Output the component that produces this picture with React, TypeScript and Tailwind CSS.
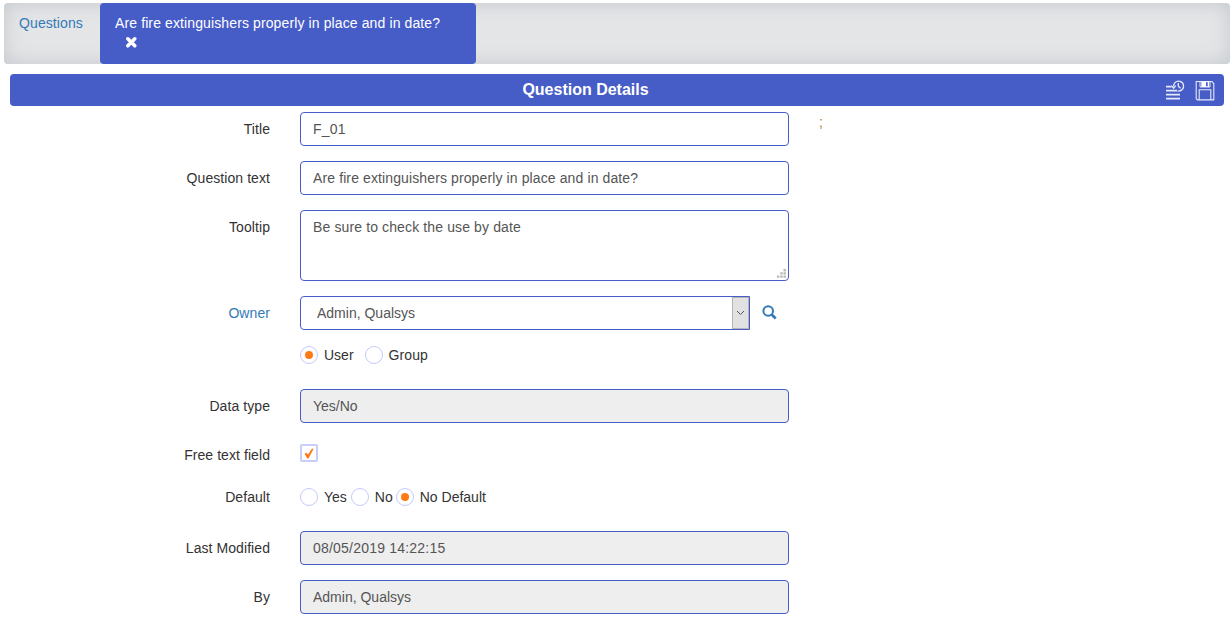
import React, { useState } from 'react'

const inputClass =
  'block w-[489px] h-[34px] rounded border border-[#465cc7] px-3 text-[#555] outline-none'

function Row({
  label,
  link,
  className = '',
  children,
}: {
  label?: string
  link?: boolean
  className?: string
  children: React.ReactNode
}) {
  return (
    <div className={`flex ${className}`}>
      <div
        className={`w-[270px] shrink-0 pt-[7px] mr-[30px] text-right tracking-[0.07px] ${link ? 'text-[#337ab7]' : 'text-[#333]'}`}
      >
        {label}
      </div>
      {children}
    </div>
  )
}

function Radio({
  label,
  checked,
  className = '',
  onSelect,
}: {
  label: string
  checked: boolean
  className?: string
  onSelect: () => void
}) {
  return (
    <button type="button" className={`flex h-5 items-center ${className}`} onClick={onSelect}>
      <span className="mr-1.5 flex size-[18px] items-center justify-center rounded-full border border-[#c5cafa] bg-white">
        {checked && <span className="size-2 rounded-full bg-[#ff7a14]" />}
      </span>
      {label}
    </button>
  )
}

function HistoryIcon() {
  return (
    <svg width="20" height="20" viewBox="0 0 20 20" fill="none" stroke="#e6e9fa">
      <path d="M1 6.7h5.5M1 10.7h11M1 14.7h14M1 18.7h14" strokeWidth="1.8" />
      <path d="M8.6 6.4a5 5 0 1 1 4 4.6" strokeWidth="1.4" />
      <path d="M6.4 5.6l2.2 2.6 2.2-2.6M13.3 3v3.2l2.2 2" strokeWidth="1.3" />
    </svg>
  )
}

function SaveIcon() {
  return (
    <svg width="20" height="21" viewBox="0 0 20 21" fill="none" stroke="#e6e9fa">
      <path d="M1.2 1.5h15.6l2 2v16.4H2.4l-1.2-1.2z" strokeWidth="1.1" />
      <path d="M4.2 20v-10.3h11.6V20" strokeWidth="1.1" />
      <path d="M5 1.5v5.5h10V1.5" strokeWidth="1" />
      <path d="M6.3 1.5h7.7v5.5H6.3z" fill="#fff" stroke="none" />
      <path d="M11 2.2h1.7v4H11z" fill="#465cc7" stroke="none" />
    </svg>
  )
}

export default function App() {
  const [ownerType, setOwnerType] = useState('User')
  const [defaultValue, setDefaultValue] = useState('No Default')
  const [freeText, setFreeText] = useState(true)

  return (
    <div className="h-[623px] w-[1232px] overflow-hidden bg-white pt-[3px] font-['Liberation_Sans',Arial,sans-serif] text-sm leading-5 text-[#333]">
      {/* Tabs */}
      <nav className="ml-1 flex h-[61px] w-[1226px] rounded bg-[#e4e5e7] shadow-[inset_0_0_20px_#c3c8cc]">
        <a className="w-24 px-[15px] py-2.5 tracking-[0.1px] text-[#337ab7]">Questions</a>
        <div className="w-[376px] rounded bg-[#465cc7] px-[15px] py-2.5 text-white">
          <div className="whitespace-nowrap tracking-[0.115px]">Are fire extinguishers properly in place and in date?</div>
          <svg className="ml-[10px] mt-[3px]" width="13" height="13" viewBox="0 0 13 13">
            <path d="M2.8 2.8l7 7M9.8 2.8l-7 7" stroke="#fff" strokeWidth="3.6" strokeLinecap="round" />
          </svg>
        </div>
      </nav>

      {/* Panel header */}
      <header className="ml-2.5 mt-2.5 flex h-8 w-[1214px] items-center rounded bg-[#465cc7] text-white">
        <h1 className="flex-1 pr-1 text-center text-base font-bold">Question Details</h1>
        <div className="mr-[9px] flex items-center gap-2.5">
          <HistoryIcon />
          <SaveIcon />
        </div>
      </header>

      <form className="mt-1.5">
        <Row label="Title" className="mb-[15px]">
          <input className={`${inputClass} tracking-[0.25px]`} defaultValue="F_01" />
          <span className="ml-[30px] text-[#b8792e]">;</span>
        </Row>

        <Row label="Question text" className="mb-[15px]">
          <input
            className={`${inputClass} tracking-[0.115px]`}
            defaultValue="Are fire extinguishers properly in place and in date?"
          />
        </Row>

        <Row label="Tooltip" className="mb-[15px]">
          <div className="relative h-[71px]">
            <textarea
              className="block h-[71px] w-[489px] resize-none rounded border border-[#465cc7] px-3 py-1.5 tracking-[0.125px] text-[#555] outline-none"
              defaultValue="Be sure to check the use by date"
            />
            <svg className="absolute bottom-[3px] right-[3px]" width="9" height="9" viewBox="0 0 9 9" fill="#b8b8b8">
              <path d="M6.5 0h2.4v2.4H6.5zM3.3 3.2h2.4v2.4H3.3zM6.5 3.2h2.4v2.4H6.5zM0 6.4h2.4v2.4H0zM3.3 6.4h2.4v2.4H3.3zM6.5 6.4h2.4v2.4H6.5z" />
            </svg>
          </div>
        </Row>

        <Row label="Owner" link className="mb-[15px]">
          <div className="flex h-[34px] w-[450px] items-stretch rounded-l border border-[#465cc7]">
            <span className="flex-1 pl-4 pt-1.5 text-[#555]">Admin, Qualsys</span>
            <span className="flex w-[17px] items-center justify-center border border-[#b5b5b5] bg-[#e1e1e1]">
              <svg width="9" height="6" viewBox="0 0 9 6" fill="none" stroke="#555">
                <path d="M1 1l3.5 3.5L8 1" />
              </svg>
            </span>
          </div>
          <svg className="ml-3 mt-[9px]" width="15" height="15" viewBox="0 0 15 15" fill="none" stroke="#337ab7">
            <circle cx="6.2" cy="6" r="4.8" strokeWidth="2" />
            <path d="M9.7 9.5l4 4" strokeWidth="2.6" />
          </svg>
        </Row>

        <Row className="mb-6 h-5">
          <Radio label="User" checked={ownerType === 'User'} onSelect={() => setOwnerType('User')} />
          <Radio
            label="Group"
            className="ml-[11px] tracking-[0.1px]"
            checked={ownerType === 'Group'}
            onSelect={() => setOwnerType('Group')}
          />
        </Row>

        <Row label="Data type" className="mb-[15px]">
          <input className={`${inputClass} bg-[#eee]`} value="Yes/No" readOnly />
        </Row>

        <Row label="Free text field" className="mb-[15px] h-[34px]">
          <button
            type="button"
            className="mt-[6px] flex size-[18px] items-center justify-center rounded-xs border-2 border-[#c9cdf9] bg-white"
            onClick={() => setFreeText(!freeText)}
          >
            {freeText && (
              <svg className="shrink-0" width="10" height="11" viewBox="0 0 10 11" fill="#ff7a14">
                <path d="M.6 5.8l1.7-1.1 1.7 1.9L8 .6l1.5.5-5 9.3H3.3z" />
              </svg>
            )}
          </button>
        </Row>

        <Row label="Default" className="-mt-[7px] mb-[17px] h-[34px]">
          <div className="flex pt-[7px]">
            <Radio label="Yes" checked={defaultValue === 'Yes'} onSelect={() => setDefaultValue('Yes')} />
            <Radio
              label="No"
              className="ml-1"
              checked={defaultValue === 'No'}
              onSelect={() => setDefaultValue('No')}
            />
            <Radio
              label="No Default"
              className="ml-[3px]"
              checked={defaultValue === 'No Default'}
              onSelect={() => setDefaultValue('No Default')}
            />
          </div>
        </Row>

        <Row label="Last Modified" className="mb-[15px]">
          <input className={`${inputClass} bg-[#eee] tracking-[0.21px]`} value="08/05/2019 14:22:15" readOnly />
        </Row>

        <Row label="By">
          <input className={`${inputClass} bg-[#eee]`} value="Admin, Qualsys" readOnly />
        </Row>
      </form>
    </div>
  )
}
